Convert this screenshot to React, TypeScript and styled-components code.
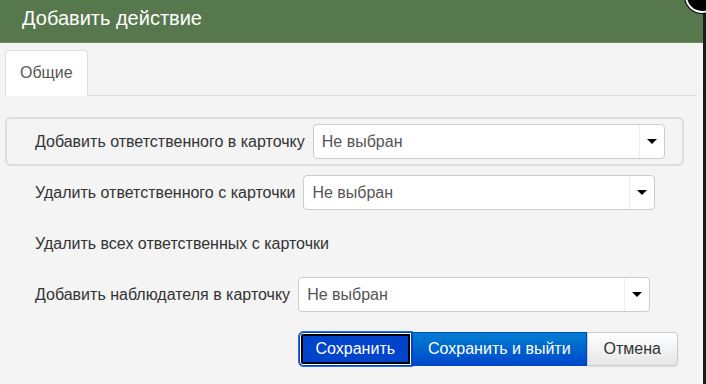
import React, { useState } from 'react';
import styled, { createGlobalStyle } from 'styled-components';

const GlobalStyle = createGlobalStyle`
  html, body {
    margin: 0;
    padding: 0;
    background: #1b1b1b;
    font-family: "Liberation Sans", Arial, sans-serif;
    overflow: hidden;
  }
`;

const Dialog = styled.div`
  position: relative;
  width: 703px;
  height: 384px;
  background: #f4f4f4;
`;

const Header = styled.div`
  height: 43px;
  background: #57784d;
  display: flex;
  align-items: center;
  padding-left: 22px;
  box-sizing: border-box;
  border-bottom: 1px solid #6a8a60;
`;

const Title = styled.h3`
  margin: 0 0 5px;
  font-size: 20px;
  font-weight: normal;
  color: #fff;
`;

const CloseButton = styled.button`
  position: absolute;
  top: -21px;
  right: -16px;
  width: 34px;
  height: 34px;
  border-radius: 50%;
  background: #000;
  border: 2px solid #fff;
  box-shadow: 0 0 0 1px #000;
  padding: 0;
`;

const TabBar = styled.div`
  display: flex;
  margin: 7px 6px 0 5px;
  border-bottom: 1px solid #ddd;
`;

const Tab = styled.div<{ $active?: boolean }>`
  height: 44px;
  padding: 0 14px 0 14px;
  display: flex;
  align-items: center;
  font-size: 16px;
  color: #555;
  background: ${p => (p.$active ? '#fff' : 'transparent')};
  border: 1px solid ${p => (p.$active ? '#ddd' : 'transparent')};
  border-bottom-color: transparent;
  border-radius: 4px 4px 0 0;
  margin-bottom: -1px;
`;

const Form = styled.div`
  display: flex;
  flex-direction: column;
  gap: 2px;
  margin: 21px 19px 0 5px;
`;

const Row = styled.div<{ $framed?: boolean }>`
  height: 49px;
  box-sizing: border-box;
  display: flex;
  align-items: center;
  gap: 8px;
  padding-left: 28px;
  border: 2px solid ${p => (p.$framed ? '#dcdcdc' : 'transparent')};
  border-radius: 6px;
`;

const Label = styled.span`
  font-size: 16px;
  color: #333;
  white-space: nowrap;
`;

const SelectBox = styled.div`
  width: 352px;
  height: 35px;
  box-sizing: border-box;
  display: flex;
  align-items: stretch;
  background: #fff;
  border: 1px solid #ccc;
  border-radius: 4px;
`;

const SelectValue = styled.span`
  flex: 1;
  display: flex;
  align-items: center;
  padding-left: 8px;
  font-size: 16px;
  color: #555;
`;

const Caret = styled.span`
  width: 24px;
  display: flex;
  align-items: center;
  justify-content: center;
  border-left: 1px solid #eee;
  &::after {
    content: '';
    border-left: 5px solid transparent;
    border-right: 5px solid transparent;
    border-top: 5px solid #000;
  }
`;

const Actions = styled.div`
  display: flex;
  justify-content: flex-end;
  margin: 13px 25px 0 0;
`;

const Button = styled.button<{ $variant: 'focus' | 'primary' | 'default' }>`
  height: 34px;
  box-sizing: border-box;
  padding: 0 ${p => (p.$variant === 'primary' ? 15 : 16)}px;
  font-family: inherit;
  font-size: 16px;
  cursor: pointer;
  color: ${p => (p.$variant === 'default' ? '#333' : '#fff')};
  border: 1px solid ${p => (p.$variant === 'default' ? '#ccc' : '#0044cc')};
  background: ${p =>
    p.$variant === 'focus'
      ? '#0044cc'
      : p.$variant === 'primary'
        ? 'linear-gradient(#0080d0, #0047cc)'
        : 'linear-gradient(#fff, #e6e6e6)'};
  border-radius: ${p =>
    p.$variant === 'focus' ? '4px 0 0 4px' : p.$variant === 'default' ? '0 4px 4px 0' : '0'};
  box-shadow: ${p =>
    p.$variant === 'focus'
      ? 'inset 0 0 0 1px #fff, inset 0 0 0 3px #000'
      : p.$variant === 'default'
        ? '0 1px 2px rgba(0,0,0,0.1)'
        : 'none'};
  outline: ${p => (p.$variant === 'focus' ? '1px solid #2a6fd6' : 'none')};
`;

const rows = [
  { label: 'Добавить ответственного в карточку', select: true, framed: true },
  { label: 'Удалить ответственного с карточки', select: true },
  { label: 'Удалить всех ответственных с карточки', select: false },
  { label: 'Добавить наблюдателя в карточку', select: true },
];

export default function App() {
  const [tab] = useState('Общие');

  return (
    <>
      <GlobalStyle />
      <Dialog>
        <Header>
          <Title>Добавить действие</Title>
        </Header>
        <CloseButton aria-label="close" />
        <TabBar>
          <Tab $active>{tab}</Tab>
        </TabBar>
        <Form>
          {rows.map(row => (
            <Row key={row.label} $framed={row.framed}>
              <Label>{row.label}</Label>
              {row.select && (
                <SelectBox>
                  <SelectValue>Не выбран</SelectValue>
                  <Caret />
                </SelectBox>
              )}
            </Row>
          ))}
        </Form>
        <Actions>
          <Button $variant="focus">Сохранить</Button>
          <Button $variant="primary">Сохранить и выйти</Button>
          <Button $variant="default">Отмена</Button>
        </Actions>
      </Dialog>
    </>
  );
}
